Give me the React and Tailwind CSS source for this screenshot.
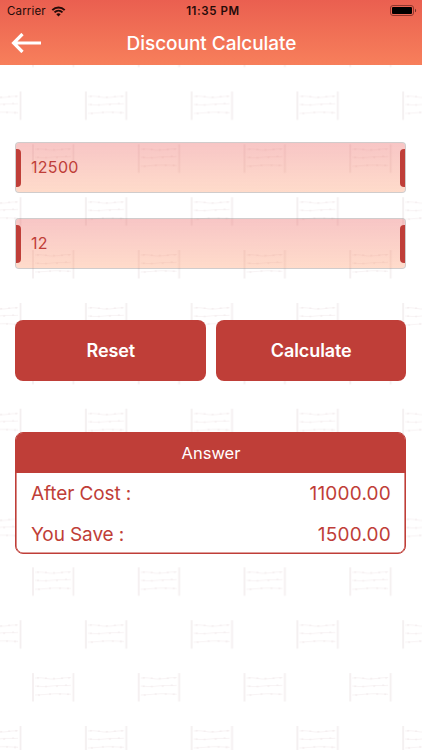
import { useState } from "react"

function FenceBackground() {
  return (
    <svg className="absolute inset-0 h-full w-full" aria-hidden="true">
      <defs>
        <g id="fence">
          <path d="M1 0V28.5M41.4 0V28.5" stroke="#f4eff0" strokeWidth="1.8" />
          <path
            d="M3 5q6-.8 12 .4t12 .2t12-1M3 13q7 .9 14 .1t12-.6t10-.3M3 22q6-.2 12-.9t12-.3t12 .5"
            fill="none"
            stroke="#f8f3f4"
            strokeWidth="1"
          />
          <path
            d="M5 4.8h2M13 5.3h2M21 5.6h2M29 5.3h2M36 4.8h2M5 13.2h2M13 13.5h2M24 13h2M33 12.3h2M6 22h2M17 21h2M27 20.9h2M35 21.3h2"
            stroke="#f4eeef"
            strokeWidth="1.5"
          />
        </g>
        <pattern id="fences" x="32" y="38.6" width="105.75" height="105.75" patternUnits="userSpaceOnUse">
          <use href="#fence" />
          <use href="#fence" x="52.9" y="52.9" />
        </pattern>
      </defs>
      <rect y="65" width="100%" height="100%" fill="url(#fences)" />
    </svg>
  )
}

function StatusBar() {
  return (
    <div className="grid h-[22px] grid-cols-3 items-center pl-[7px] pr-[5px] text-[11.5px] text-[#240b09]">
      <div className="flex items-center gap-[5px] pt-px">
        <span className="tracking-[0.15px]">Carrier</span>
        <svg className="h-[11px] w-[15px]" viewBox="0 0 14 11" fill="none" stroke="currentColor" strokeWidth="2">
          <path d="M.8 4.1C4.3.5 9.7.5 13.2 4.1" />
          <path d="M3 6.4c2.3-2.3 5.7-2.3 8 0" />
          <path d="M7 10.5 4.8 8.2c1.3-1.2 3.1-1.2 4.4 0Z" fill="currentColor" stroke="none" />
        </svg>
      </div>
      <span className="pt-px pl-[2px] text-center font-semibold tracking-[0.6px] whitespace-nowrap">11:35 PM</span>
      <svg className="mb-px h-[11px] w-[27px] justify-self-end" viewBox="0 0 27 11">
        <rect x=".5" y=".5" width="23" height="10" rx="2.5" fill="none" stroke="#90372f" />
        <rect x="2" y="2" width="20" height="7" rx="1" fill="#000" />
        <path d="M25 3.7c1.5.5 1.5 3.1 0 3.6Z" fill="#70302a" />
      </svg>
    </div>
  )
}

function Header() {
  return (
    <header className="relative h-[65px] bg-linear-to-b from-[#ea5f50] to-[#f77f5b]">
      <StatusBar />
      <div className="grid h-[42px] grid-cols-[42px_1fr_42px] items-center">
        <button aria-label="Back" className="pl-[11px]">
          <svg className="h-5 w-[31px]" viewBox="0 0 31 20" fill="none" stroke="#fff" strokeWidth="3.2">
            <path d="M2.5 10H30M11.5 1 2.6 10l8.9 9" />
          </svg>
        </button>
        <h1 className="pt-px pl-px text-center text-[19px] leading-none font-medium tracking-[-0.03px] text-white">
          Discount Calculate
        </h1>
      </div>
    </header>
  )
}

function NumberField({ label, value, onChange }) {
  return (
    <div className="flex h-[51px] items-center justify-between overflow-hidden rounded-[4px] border border-[#8a8080]/40 bg-linear-to-b from-[#ea5f5e]/36 to-[#ff8850]/30 bg-clip-padding">
      <span className="h-[38px] w-[5px] shrink-0 rounded-r-[4px] bg-[#bf3e38]" />
      <input
        aria-label={label}
        value={value}
        onChange={(e) => onChange(e.target.value)}
        className="mb-[2px] min-w-0 flex-1 bg-transparent px-[10px] text-[16px] tracking-[0.3px] text-[#bf3e38] outline-none"
      />
      <span className="h-[38px] w-[5px] shrink-0 rounded-l-[4px] bg-[#bf3e38]" />
    </div>
  )
}

function ResultRow({ label, value }) {
  return (
    <div className="flex h-[41px] items-center justify-between pr-[14px] pl-[15px] text-[19px]">
      <span className="tracking-[-0.1px]">{label}</span>
      <span className="tracking-[0.2px]">{value}</span>
    </div>
  )
}

export default function App() {
  const [cost, setCost] = useState("12500")
  const [discount, setDiscount] = useState("12")

  const saved = (Number(cost) * Number(discount)) / 100 || 0
  const afterCost = (Number(cost) || 0) - saved

  const reset = () => {
    setCost("")
    setDiscount("")
  }

  return (
    <div className="relative h-[750px] w-full overflow-hidden bg-white font-['Inter',sans-serif]">
      <FenceBackground />
      <Header />
      <main className="relative pt-[77px] pr-4 pl-[15px]">
        <div className="grid gap-[25px]">
          <NumberField label="Cost" value={cost} onChange={setCost} />
          <NumberField label="Discount" value={discount} onChange={setDiscount} />
        </div>

        <div className="mt-[51px] grid h-[61px] grid-cols-2 gap-[10px] text-[18px] font-semibold tracking-[-0.1px] text-white">
          <button onClick={reset} className="rounded-[8px] bg-[#bf3e38] pl-px">
            Reset
          </button>
          <button className="rounded-[8px] bg-[#bf3e38] pl-px">Calculate</button>
        </div>

        <section className="mt-[51px] h-[122px] overflow-hidden rounded-[8px] border border-[#bf3e38] bg-white text-[#bf3e38] shadow-[inset_0_0_0_0.6px_#bf3e38]">
          <h2 className="grid h-[40px] place-items-center bg-[#bf3e38] pl-px text-[16.5px] text-white">Answer</h2>
          <div className="pt-px">
            <ResultRow label="After Cost :" value={afterCost.toFixed(2)} />
            <ResultRow label="You Save :" value={saved.toFixed(2)} />
          </div>
        </section>
      </main>
    </div>
  )
}
